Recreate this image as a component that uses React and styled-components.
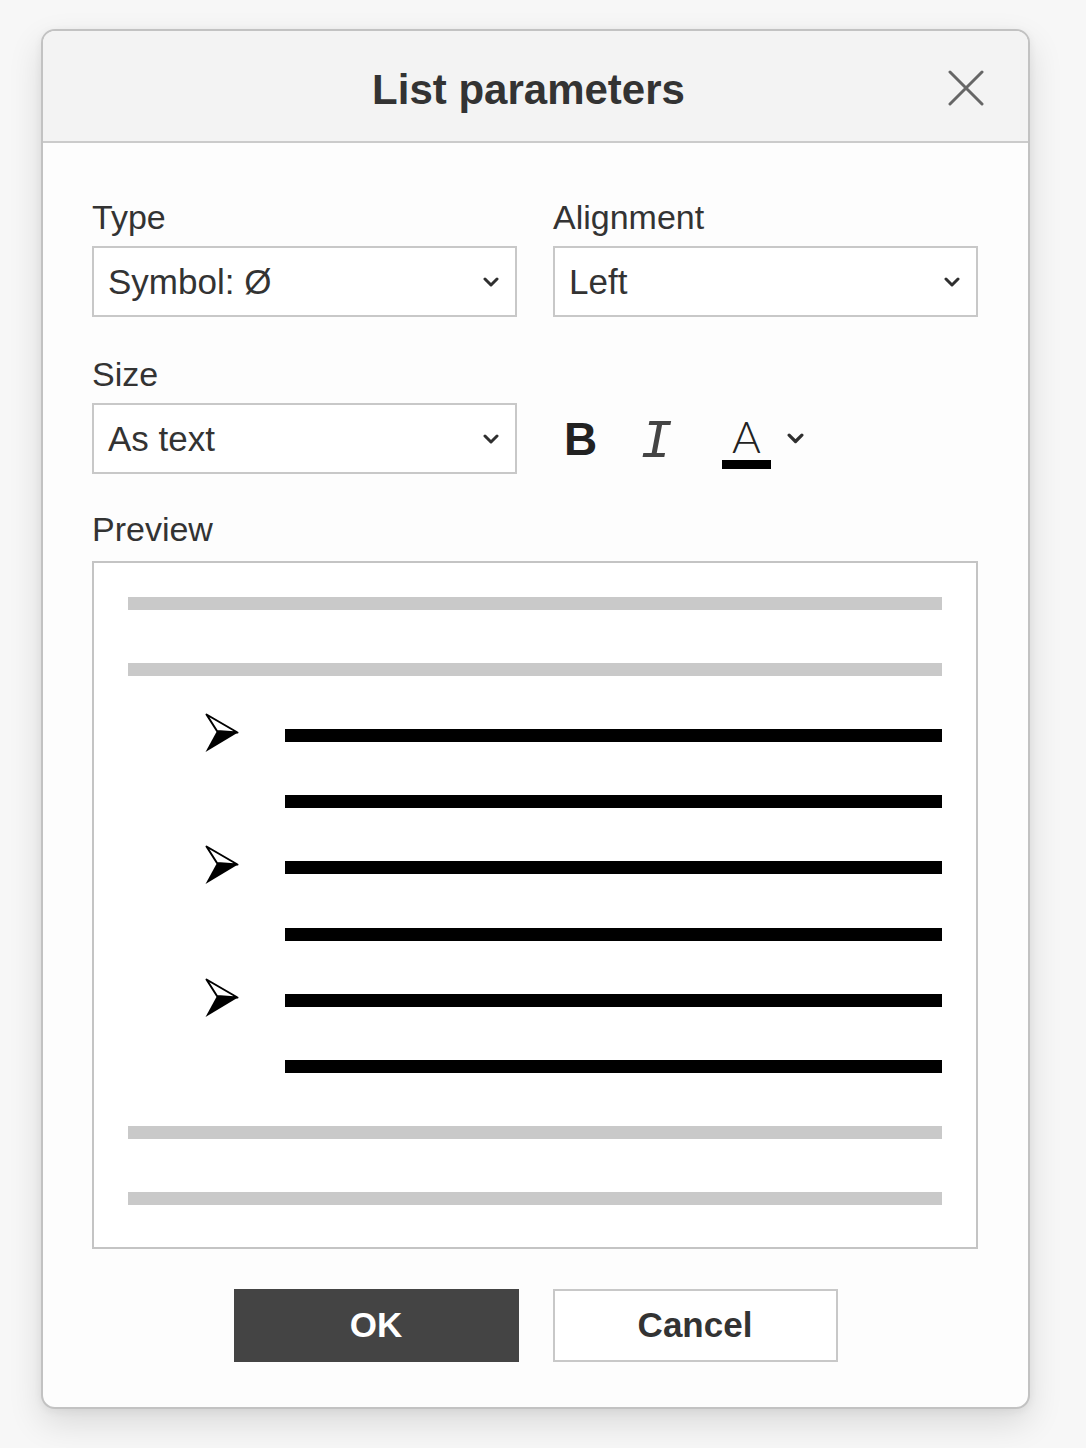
import styled, { createGlobalStyle } from "styled-components";

const FONT = `"Liberation Sans", Arial, Helvetica, sans-serif`;

const GlobalStyle = createGlobalStyle`
  html, body {
    margin: 0;
    padding: 0;
    background: #f7f7f7;
  }
  body {
    font-family: ${FONT};
    color: #333;
  }
`;

const previewRows = [
  { kind: "gray" },
  { kind: "gray" },
  { kind: "black", bullet: true },
  { kind: "black" },
  { kind: "black", bullet: true },
  { kind: "black" },
  { kind: "black", bullet: true },
  { kind: "black" },
  { kind: "gray" },
  { kind: "gray" },
];

const Chevron = ({ size = 16 }) => (
  <svg width={size} height={size * 0.625} viewBox="0 0 16 10" fill="none">
    <path d="M2 2 L8 8 L14 2" stroke="#2f2f2f" strokeWidth="3" strokeLinecap="round" strokeLinejoin="round" />
  </svg>
);

const CloseIcon = () => (
  <svg width="36" height="36" viewBox="0 0 36 36" fill="none">
    <path d="M2 2 L34 34 M34 2 L2 34" stroke="#666" strokeWidth="3" strokeLinecap="round" />
  </svg>
);

// the 3-D arrowhead bullet (like ➢)
const ArrowBullet = () => (
  <svg width="34" height="40" viewBox="0 0 34 40">
    <polygon points="1.5,1.5 32.5,19.5 12,18" fill="#fff" stroke="#000" strokeWidth="2" strokeLinejoin="round" />
    <polygon points="12,18 33,19.5 0.5,39" fill="#000" />
  </svg>
);

const Select = ({ value }) => (
  <SelectBox>
    <SelectValue>{value}</SelectValue>
    <Chevron />
  </SelectBox>
);

const App = () => {
  return (
    <>
      <GlobalStyle />
      <Page>
        <Dialog>
          <Header>
            <Title>List parameters</Title>
            <CloseButton aria-label="Close">
              <CloseIcon />
            </CloseButton>
          </Header>
          <Body>
            <FieldGrid>
              <Field>
                <Label>Type</Label>
                <Select value="Symbol: Ø" />
              </Field>
              <Field>
                <Label>Alignment</Label>
                <Select value="Left" />
              </Field>
              <Field>
                <Label>Size</Label>
                <Select value="As text" />
              </Field>
              <Toolbar>
                <BoldButton>B</BoldButton>
                <ItalicButton>I</ItalicButton>
                <ColorButton>
                  <ColorLetter>A</ColorLetter>
                  <Chevron size={17} />
                </ColorButton>
              </Toolbar>
            </FieldGrid>

            <PreviewLabel>Preview</PreviewLabel>
            <PreviewBox>
              {previewRows.map((row, i) => (
                <PreviewRow key={i} indent={row.kind === "black"}>
                  {row.kind === "black" && (
                    <BulletSlot>{row.bullet && <ArrowBullet />}</BulletSlot>
                  )}
                  <PreviewLine kind={row.kind} />
                </PreviewRow>
              ))}
            </PreviewBox>

            <Actions>
              <PrimaryButton>OK</PrimaryButton>
              <SecondaryButton>Cancel</SecondaryButton>
            </Actions>
          </Body>
        </Dialog>
      </Page>
    </>
  );
};

const Page = styled.div`
  width: 1086px;
  min-height: 1448px;
  padding: 29px 0 0 41px;
  box-sizing: border-box;
`;
const Dialog = styled.div`
  width: 989px;
  height: 1380px;
  box-sizing: border-box;
  background: #fdfdfd;
  border: 2px solid #c2c2c2;
  border-radius: 14px;
  box-shadow: 0 14px 34px rgba(0, 0, 0, 0.12), 0 2px 8px rgba(0, 0, 0, 0.06);
  overflow: hidden;
  display: flex;
  flex-direction: column;
`;
const Header = styled.div`
  position: relative;
  height: 110px;
  background: #f3f3f3;
  border-bottom: 2px solid #cbcbcb;
  display: flex;
  align-items: center;
  justify-content: center;
  padding-right: 14px;
`;
const Title = styled.h1`
  margin: 0;
  font-family: ${FONT};
  font-size: 42px;
  font-weight: bold;
  color: #333;
  padding-top: 8px;
`;
const CloseButton = styled.button`
  position: absolute;
  right: 44px;
  top: 39px;
  background: none;
  border: none;
  padding: 0;
  display: flex;
  cursor: pointer;
`;
const Body = styled.div`
  padding: 55px 49px 0 49px;
  display: flex;
  flex-direction: column;
`;
const FieldGrid = styled.div`
  display: grid;
  grid-template-columns: 425px 425px;
  column-gap: 36px;
  row-gap: 38px;
`;
const Field = styled.div`
  display: flex;
  flex-direction: column;
  gap: 9px;
`;
const Label = styled.div`
  font-size: 34px;
  line-height: 39px;
  color: #333;
`;
const SelectBox = styled.div`
  height: 71px;
  box-sizing: border-box;
  border: 2px solid #c8c8c8;
  background: #fff;
  display: flex;
  align-items: center;
  justify-content: space-between;
  padding: 0 16px 0 14px;
`;
const SelectValue = styled.span`
  font-size: 35px;
  color: #333;
`;
const Toolbar = styled.div`
  align-self: end;
  height: 71px;
  display: flex;
  align-items: center;
  padding-left: 11px;
`;
const ToolButton = styled.button`
  background: none;
  border: none;
  padding: 0;
  color: #222;
  display: flex;
  align-items: center;
  cursor: pointer;
`;
const BoldButton = styled(ToolButton)`
  font-family: ${FONT};
  font-weight: bold;
  font-size: 46px;
  width: 76px;
`;
const ItalicButton = styled(ToolButton)`
  font-family: "Liberation Mono", "Courier New", monospace;
  font-style: italic;
  font-size: 54px;
  width: 82px;
  padding-top: 8px;
  color: #444;
`;
const ColorButton = styled(ToolButton)`
  gap: 16px;
`;
const ColorLetter = styled.span`
  font-family: Lato, "Open Sans", sans-serif;
  font-weight: 300;
  font-size: 44px;
  line-height: 44px;
  width: 49px;
  text-align: center;
  color: #222;
  border-bottom: 9px solid #000;
  padding-bottom: 2px;
  margin-top: 6px;
`;
const PreviewLabel = styled.div`
  margin-top: 36px;
  font-size: 34px;
  line-height: 39px;
  color: #333;
`;
const PreviewBox = styled.div`
  margin-top: 12px;
  width: 886px;
  box-sizing: border-box;
  border: 2px solid #c4c4c4;
  background: #fff;
  padding: 7px 34px 15px 34px;
  display: flex;
  flex-direction: column;
`;
const PreviewRow = styled.div`
  height: 66.2px;
  display: grid;
  grid-template-columns: ${({ indent }) => (indent ? "157px 1fr" : "1fr")};
  align-items: center;
`;
const BulletSlot = styled.div`
  padding-left: 77px;
  display: flex;
  align-items: center;
  margin-bottom: 5px;
`;
const PreviewLine = styled.div`
  height: 13px;
  background: ${({ kind }) => (kind === "black" ? "#000" : "#c9c9c9")};
`;
const Actions = styled.div`
  margin-top: 40px;
  display: flex;
  justify-content: center;
  gap: 34px;
`;
const BaseButton = styled.button`
  width: 285px;
  height: 73px;
  box-sizing: border-box;
  font-family: ${FONT};
  font-weight: bold;
  font-size: 35px;
  cursor: pointer;
`;
const PrimaryButton = styled(BaseButton)`
  background: #444;
  color: #fff;
  border: none;
`;
const SecondaryButton = styled(BaseButton)`
  background: #fff;
  color: #333;
  border: 2px solid #c8c8c8;
`;

export default App;
